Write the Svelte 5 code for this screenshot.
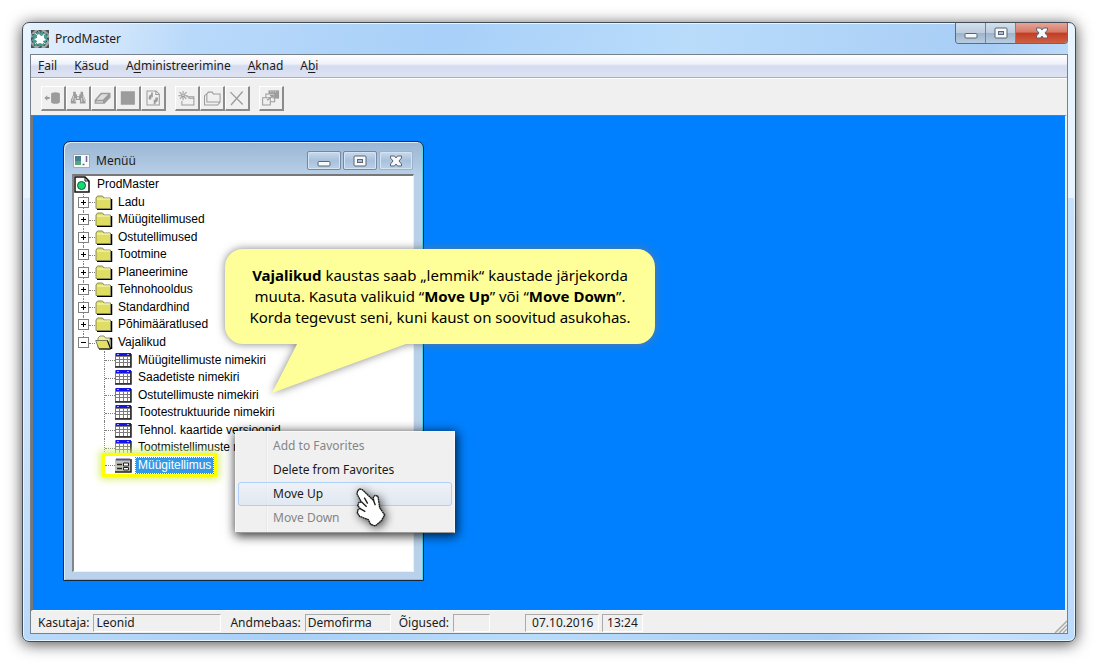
<script>
  const menus = [
    ['', 'F', 'ail'],
    ['', 'K', 'äsud'],
    ['A', 'd', 'ministreerimine'],
    ['', 'A', 'knad'],
    ['A', 'b', 'i'],
  ];

  const toolGroups = [
    ['Connect', 'Find', 'Erase', 'Stop', 'Refresh'],
    ['New folder', 'Folder', 'Delete'],
    ['Windows'],
  ];

  const folders = [
    'Ladu',
    'Müügitellimused',
    'Ostutellimused',
    'Tootmine',
    'Planeerimine',
    'Tehnohooldus',
    'Standardhind',
    'Põhimääratlused',
  ];

  const favorites = [
    'Müügitellimuste nimekiri',
    'Saadetiste nimekiri',
    'Ostutellimuste nimekiri',
    'Tootestruktuuride nimekiri',
    'Tehnol. kaartide versioonid',
    'Tootmistellimuste nimekiri',
    'Müügitellimus',
  ];

  const actions = [
    { label: 'Add to Favorites', disabled: true },
    { label: 'Delete from Favorites', disabled: false },
    { label: 'Move Up', disabled: false },
    { label: 'Move Down', disabled: true },
  ];

  let selected = $state('Müügitellimus');
  let active = $state('Move Up');
</script>

{#snippet minIcon()}
  <svg width="14" height="12" viewBox="0 0 14 12" aria-hidden="true">
    <rect x="1" y="6.5" width="12" height="4.5" rx="1" fill="#f6f8fa" stroke="#5b6573" />
  </svg>
{/snippet}

{#snippet maxIcon()}
  <svg width="14" height="12" viewBox="0 0 14 12" aria-hidden="true">
    <rect x="1" y="1" width="12" height="10" rx="1" fill="#f6f8fa" stroke="#5b6573" />
    <rect x="4.5" y="4.5" width="5" height="3" fill="#a9bfd6" stroke="#5b6573" />
  </svg>
{/snippet}

{#snippet closeIcon()}
  <svg width="14" height="12" viewBox="0 0 14 12" aria-hidden="true">
    <path
      d="M1.500 1h4L7 3l1.500-2h4v2L10 6l2.500 3v2h-4L7 9l-1.500 2h-4V9L4 6 1.500 3z"
      fill="#f6f8fa"
      stroke="#5b6573"
      stroke-linejoin="round"
    />
  </svg>
{/snippet}

{#snippet toolIcon(name)}
  <svg viewBox="0 0 75 72" aria-hidden="true">
    {#if name === 'Connect'}
      <path d="M8 36l10-9v6h8v6h-8v6z M31 22q0-6 15-6t15 6v28q0 6-15 6t-15-6z" fill="#9c9c9c" />
    {:else if name === 'Find'}
      <path
        d="M21 15h9v8h4v7h8v-7h4v-8h9v9l8 18v13H44V43H31v12H13V43l8-18z"
        fill="#9c9c9c"
      />
      <path d="M23 30l-5 16M28 36v14M50 36v14M55 30l5 16" stroke="#efefef" stroke-width="2.500" />
      <path d="M35 33h5v6h-5z" fill="#efefef" />
    {:else if name === 'Erase'}
      <path d="M30 18h33v16L43 56H9V43z" fill="#9c9c9c" />
      <path d="M33 23h22L37 42H16zM15 47h22v4H15z" fill="#dedede" />
    {:else if name === 'Stop'}
      <path d="M13 13h48v46H13z" fill="#9c9c9c" />
    {:else if name === 'Refresh'}
      <path d="M17 12h31l11 11v37H17zM47 12v12h12" fill="none" stroke="#9c9c9c" stroke-width="3.500" />
      <path
        d="M37 17v18l-4-4-2 10h-8q-2-15 8-17v-7zM40 57V40l4 4 2-10h8q2 15-8 17v6z"
        fill="#9c9c9c"
      />
    {:else if name === 'New folder'}
      <path d="M35 32h26v28H20V46M44 32v5h17" fill="none" stroke="#9c9c9c" stroke-width="3.500" />
      <path
        d="M24 12v32M8 28h32M12 16l24 24M36 16L12 40"
        stroke="#9c9c9c"
        stroke-width="3.500"
        stroke-dasharray="13 5 14"
      />
    {:else if name === 'Folder'}
      <path
        d="M20 22l5-6h13l4 6h23v28H20zM20 22l-8 6v32h45l7-9"
        fill="none"
        stroke="#9c9c9c"
        stroke-width="3.500"
      />
    {:else if name === 'Delete'}
      <path d="M15 16l42 42M57 14L17 60" stroke="#9c9c9c" stroke-width="4.500" />
    {:else}
      <path d="M29 10h36v28H29z" fill="#9c9c9c" />
      <path d="M35 15h4M43 15h4M51 15h4" stroke="#efefef" stroke-width="2.500" />
      <path d="M20 22h30v27H20z" fill="#efefef" stroke="#9c9c9c" stroke-width="3.500" />
      <path d="M9 35h26v25H9z" fill="#efefef" stroke="#9c9c9c" stroke-width="3.500" />
      <path d="M24 44l20-15M34 28h11v10" fill="none" stroke="#9c9c9c" stroke-width="4.500" />
    {/if}
  </svg>
{/snippet}

{#snippet expander(open)}
  <svg class="expander" width="11" height="11" viewBox="0 0 11 11" aria-hidden="true">
    <rect x=".5" y=".5" width="10" height="10" fill="#fff" stroke="#808080" />
    <path d={open ? 'M3 5.500h5' : 'M3 5.500h5M5.500 3v5'} stroke="#000" />
  </svg>
{/snippet}

{#snippet folderIcon(open)}
  <svg width="18" height="15" viewBox="0 0 18 15" aria-hidden="true">
    {#if open}
      <path d="M3 13V3l2-2h4l1.500 2H15v11z" fill="#f1f0a0" stroke="#8c8c6e" />
      <path d="M15 3.500h1.500V14" fill="none" stroke="#000" stroke-width="1.500" />
      <path d="M.7 5.500h11.500L15.500 14H4z" fill="#e3e063" stroke="#77775a" />
      <path d="M12.500 5.500l3.200 8.500H4" fill="none" stroke="#000" />
    {:else}
      <path d="M2 14.300h14.500V4" fill="none" stroke="#000" stroke-width="1.500" />
      <path d="M1 13V3l1.500-2h5L9 3h6.500v10.500H1z" fill="#e0de62" stroke="#8c8c5a" />
      <path d="M2 4h13" stroke="#fbfac8" />
    {/if}
  </svg>
{/snippet}

{#snippet tableIcon()}
  <svg width="17" height="15" viewBox="0 0 17 15" aria-hidden="true">
    <path d="M.5.500h15v13H.5z" fill="#fff" stroke="#777" />
    <path d="M1 0h15v3H1z" fill="#1414e6" />
    <path d="M2 1.500h2M12 1.500h2" stroke="#a8a8ff" />
    <path d="M1 3.500h15M1 6.500h15M1 9.500h15M4.500 3v11M8.500 3v11M12.500 3v11" stroke="#7c7c7c" />
    <path d="M16 1v13H0" fill="none" stroke="#222" stroke-width="1.500" />
  </svg>
{/snippet}

{#snippet formIcon()}
  <svg width="17" height="15" viewBox="0 0 17 15" aria-hidden="true">
    <path d="M0 1h16v13H0z" fill="#c4c4b8" />
    <path d="M1 1.500h14" stroke="#55558c" stroke-width="2" />
    <path d="M16 1v13H0" fill="none" stroke="#222" stroke-width="1.500" />
    <path d="M2 6.500h5M2 10.500h5" stroke="#222" stroke-width="1.500" />
    <path d="M8.500 5h5v3h-5zM8.500 9.500h5v2.500h-5z" fill="#fff" stroke="#222" />
  </svg>
{/snippet}

<main class="window">
  <header class="titlebar">
    <svg width="18" height="18" viewBox="0 0 18 18" aria-hidden="true">
      <path d="M0 0h18v18H0z" fill="#a3a8a6" />
      <path
        d="M0 0h4L0 4zM18 0h-4l4 4zM0 18h4l-4-4zM18 18h-4l4-4zM7 0h4L9 2zM7 18h4l-2-2zM0 7v4l2-2zM18 7v4l-2-2z"
        fill="#4d5252"
      />
      <path
        d="M6 1l2 2 3-2 2 2 3 1v3l1 3-2 2-1 3-3 1-2 1-2-2-3 1-2-3-1-2 1-3-1-3 3-1z"
        fill="#4a9c93"
        stroke="#3a4a4a"
        stroke-dasharray="2 2"
      />
      <path
        d="M8 4l2 2 3-1v3l2 2-3 1v3l-3-1-3 1v-3L3 9l3-1V5z"
        fill="#fff"
      />
      <path d="M4 3l2 2M14 4l-2 1M4 14l2-2M14 14l-2-2" stroke="#c9ecdf" />
    </svg>
    <h1>ProdMaster</h1>
    <div class="caption">
      <button aria-label="Minimize">{@render minIcon()}</button>
      <button aria-label="Maximize">{@render maxIcon()}</button>
      <button class="close" aria-label="Close">{@render closeIcon()}</button>
    </div>
  </header>

  <div class="client">
    <nav class="menubar">
      {#each menus as [before, key, after]}
        <button>{before}<u>{key}</u>{after}</button>
      {/each}
    </nav>

    <div class="toolbar">
      {#each toolGroups as group}
        <div class="tool-group">
          {#each group as name}
            <button aria-label={name}>{@render toolIcon(name)}</button>
          {/each}
        </div>
      {/each}
    </div>

    <div class="workspace">
      <section class="child">
        <header class="child-title">
          <svg width="17" height="14" viewBox="0 0 17 14" aria-hidden="true">
            <path d="M.5.500h16v13H.5z" fill="#f8fafb" stroke="#a5aab0" />
            <path d="M2 2h6v9H2z" fill="#427e9a" />
            <path d="M2 7h6v4H2z" fill="#55a678" />
            <path d="M9.500 10.500h2M13.500 2v6" stroke="#669" stroke-width="1.500" />
          </svg>
          <h2>Menüü</h2>
          <div class="child-caption">
            <button aria-label="Minimize menu">{@render minIcon()}</button>
            <button aria-label="Maximize menu">{@render maxIcon()}</button>
            <button class="faded" aria-label="Close menu">{@render closeIcon()}</button>
          </div>
        </header>
        <div class="child-body">
          <ul class="tree">
            <li class="root">
              <svg width="16" height="17" viewBox="0 0 16 17" aria-hidden="true">
                <path d="M1 1h10l4 4v11H1z" fill="#fff" stroke="#111" stroke-width="1.500" />
                <path d="M11 1v4h4" fill="none" stroke="#111" />
                <circle cx="7.500" cy="9.500" r="4" fill="#10e070" stroke="#145c3c" />
              </svg>
              <button>ProdMaster</button>
            </li>
            {#each folders as name}
              <li class="branch">
                {@render expander(false)}
                {@render folderIcon(false)}
                <button>{name}</button>
              </li>
            {/each}
            <li class="branch last">
              {@render expander(true)}
              {@render folderIcon(true)}
              <button>Vajalikud</button>
            </li>
            {#each favorites as name, i}
              <li class="leaf" class:last={i === favorites.length - 1}>
                {#if i === favorites.length - 1}
                  {@render formIcon()}
                {:else}
                  {@render tableIcon()}
                {/if}
                <button class:selected={selected === name} onclick={() => (selected = name)}>
                  {name}
                </button>
                {#if i === favorites.length - 1}
                  <span class="marker"></span>
                {/if}
              </li>
            {/each}
          </ul>
        </div>
      </section>

      <div class="context">
        {#each actions as action}
          <button
            class:active={active === action.label}
            disabled={action.disabled}
            onclick={() => (active = action.label)}>{action.label}</button
          >
        {/each}
      </div>

      <aside class="callout">
        <p>
          <b>Vajalikud</b> kaustas saab „lemmik“ kaustade järjekorda<br />
          muuta. Kasuta valikuid “<b>Move Up</b>” või “<b>Move Down</b>”.<br />
          Korda tegevust seni, kuni kaust on soovitud asukohas.
        </p>
        <svg class="tail" width="134" height="49" viewBox="0 0 134 49" aria-hidden="true">
          <path d="M25 0h109L0 49z" fill="#ffff99" />
        </svg>
      </aside>

      <svg class="pointer" width="31" height="40" viewBox="0 0 93 120" aria-hidden="true">
        <path
          d="M8 11l6-5 8 2 34 33-1-10 5-6 9 3 5 34 15 22-9 16-19 17-14-5-7-14-26-10-7-10 2-10 6-4-7-8 3-9 8-2-13-24z"
          fill="#fff"
          stroke="#1c1c1c"
          stroke-width="4"
          stroke-linejoin="round"
          stroke-dasharray="6 1"
        />
        <path d="M20 45l15 14M14 64l17 10M56 41l5 14M28 32l10 18" stroke="#1c1c1c" stroke-width="4" />
      </svg>
    </div>

    <footer class="status">
      <span class="label">Kasutaja:</span><output class="user">Leonid</output>
      <span class="label">Andmebaas:</span><output class="db">Demofirma</output>
      <span class="label">Õigused:</span><output class="rights"></output>
      <output class="date">07.10.2016</output>
      <output class="time">13:24</output>
      <svg class="grip" width="13" height="13" viewBox="0 0 13 13" aria-hidden="true">
        <path d="M1 13L13 1M5 13l8-8M9 13l4-4" stroke="#aaa" stroke-width="1.500" />
      </svg>
    </footer>
  </div>
</main>

<style>
  :global(body) {
    margin: 0;
    background: #fff;
  }
  :global(#app) {
    display: flow-root;
  }
  * {
    box-sizing: border-box;
  }
  button {
    margin: 0;
    padding: 0;
    border: 0;
    background: none;
    color: inherit;
    font: inherit;
    text-align: left;
    white-space: nowrap;
  }
  svg {
    display: block;
    flex: none;
  }
  .window {
    display: flex;
    flex-direction: column;
    min-height: calc(100vh - 44px);
    margin: 22px;
    padding: 0 7px 7px;
    border: 1px solid #454c55;
    border-radius: 7px;
    background:
      linear-gradient(#e8f4ff, #e8f4ff) left top / 7px 175px no-repeat,
      linear-gradient(#e8f4ff, #e8f4ff) right top / 7px 175px no-repeat,
      linear-gradient(105deg, #e4f1fd 0, #cfe5fb 8%, #b9d9fa 14%, #a8d0f8 35%, #b9dcfb 55%, #a8cdf5 80%, #c7e2fc 90%, #bcdcfc);
    box-shadow:
      inset 0 0 0 1px #e6f4ff,
      0 2px 15px rgba(0, 0, 0, 0.7);
    color: #1b1b1b;
    font: 12px/16px "Noto Sans", "Open Sans", sans-serif;
  }
  .titlebar {
    display: flex;
    align-items: center;
    gap: 6px;
    height: 31px;
    padding-left: 1px;
  }
  h1,
  h2 {
    flex: 1;
    margin: 0;
    font-size: 12px;
    font-weight: 400;
  }
  .caption {
    display: flex;
    align-self: flex-start;
    height: 21px;
    border: 1px solid #5c6b7d;
    border-top: 0;
    border-radius: 0 0 4px 4px;
    overflow: hidden;
  }
  .caption button {
    display: grid;
    place-items: center;
    width: 30px;
    border-right: 1px solid #72849a;
    background: linear-gradient(#d3e0ee, #bccddf 48%, #9db3ca 50%, #b9cde2);
  }
  .caption .close {
    width: 51px;
    border: 0;
    background: linear-gradient(#e6a598, #d67a68 46%, #c23c22 50%, #cf6044);
  }
  .client {
    display: flex;
    flex: 1;
    flex-direction: column;
    border: 1px solid #77818c;
    background: #f0f0f0;
  }
  .menubar {
    display: flex;
    gap: 17px;
    height: 23px;
    padding: 3px 7px;
    border-bottom: 1px solid #a9aebb;
    background: linear-gradient(#fff, #eef1f9 40%, #d5dcef 50%, #dee3f4);
  }
  u {
    text-underline-offset: 2px;
  }
  .toolbar {
    display: flex;
    gap: 9px;
    padding: 7px 10px 4px;
    border-top: 1px solid #fff;
  }
  .tool-group {
    display: flex;
  }
  .toolbar button {
    width: 25px;
    height: 25px;
    border: 1px solid #fff;
    border-right: 2px solid #8b8b8b;
    border-bottom: 2px solid #8b8b8b;
  }
  .toolbar svg {
    width: 100%;
    height: 100%;
  }
  .workspace {
    position: relative;
    flex: 1;
    min-height: 480px;
    border: 1px solid #777;
    border-left-width: 2px;
    border-right: 2px solid #eee;
    border-bottom-color: #fff;
    background: #0080ff;
  }
  .child {
    position: absolute;
    top: 25px;
    left: 30px;
    display: flex;
    flex-direction: column;
    width: 361px;
    padding: 0 9px 8px 8px;
    border: 1px solid #17283a;
    border-radius: 7px 7px 0 0;
    background: linear-gradient(#9ab6d3, #b9d0e8 34px, #b9d1ea);
    box-shadow:
      inset 1px 1px 0 #dcecf8,
      inset -1px -1px 0 #56d7e6;
  }
  .child-title {
    display: flex;
    align-items: center;
    gap: 6px;
    height: 32px;
    padding: 5px 1px 0;
  }
  .child-caption {
    display: flex;
    gap: 2px;
  }
  .child-caption button {
    display: grid;
    place-items: center;
    width: 34px;
    height: 19px;
    border: 1px solid #7289a4;
    border-radius: 2px;
    background: linear-gradient(#c9daec, #a8c1dc 50%, #b9d0e7);
    box-shadow: inset 0 0 0 1px #d5e4f2;
  }
  .child-caption .faded {
    border-color: #9ab2cc;
  }
  .child-body {
    height: 398px;
    border: 1px solid #f0f0f0;
    border-top: 2px solid #777;
    border-left: 2px solid #858585;
    background: #fff;
  }
  .tree {
    display: grid;
    grid-auto-rows: 1fr;
    height: 298px;
    margin: 0;
    padding: 0;
    color: #000;
    font: 12px/15px "Liberation Sans", Arial, sans-serif;
    list-style: none;
  }
  .tree li {
    position: relative;
    display: flex;
    align-items: center;
  }
  .root {
    gap: 5px;
  }
  .branch {
    gap: 3px;
    padding-left: 4px;
  }
  .branch .expander {
    position: relative;
    z-index: 1;
    margin-right: 3px;
  }
  .branch::before,
  .leaf::before {
    position: absolute;
    top: 0;
    bottom: 0;
    left: 9px;
    border-left: 1px dotted #808080;
    content: "";
  }
  .branch::after,
  .leaf::after {
    position: absolute;
    top: 50%;
    left: 15px;
    width: 6px;
    border-top: 1px dotted #808080;
    content: "";
  }
  .leaf {
    gap: 4px;
    padding-left: 41px;
  }
  .leaf::before {
    left: 30px;
  }
  .leaf::after {
    left: 31px;
    width: 10px;
  }
  .last::before {
    bottom: 50%;
  }
  .tree button {
    padding: 0 2px;
  }
  .tree .selected {
    outline: 1px dotted #b56a2c;
    background: #3399e6;
    color: #fff;
  }
  .marker {
    position: absolute;
    top: -3px;
    left: 28px;
    width: 115px;
    height: 24px;
    border: 3px solid #ffff00;
    box-shadow: 0 0 8px 2px #d4ee70;
  }
  .context {
    position: absolute;
    top: 315px;
    left: 202px;
    display: flex;
    flex-direction: column;
    width: 220px;
    padding: 2px;
    border: 1px solid #f8f8f8;
    border-bottom-color: #999;
    background: linear-gradient(90deg, transparent 30px, #e0e0e0 30px, #fff 32px, transparent 32px) #f0f0f0;
    box-shadow: 1px 2px 10px 1px rgba(0, 0, 0, 0.8);
  }
  .context button {
    height: 24px;
    padding-left: 34px;
    border: 1px solid transparent;
    border-radius: 3px;
  }
  .context button:disabled {
    color: #858585;
  }
  .context .active {
    border-color: #aecff7;
    background: linear-gradient(rgba(238, 243, 250, 0.6), rgba(215, 227, 243, 0.6));
  }
  .callout {
    position: absolute;
    top: 133px;
    left: 192px;
    width: 430px;
    padding: 16px 0;
    border-radius: 18px;
    background: #ffff99;
    color: #000;
    filter: drop-shadow(0 0 4px rgba(120, 120, 120, 0.9));
    font: 15px/21px "Noto Sans", "Open Sans", sans-serif;
    text-align: center;
  }
  .callout p {
    margin: 0;
    white-space: nowrap;
  }
  .tail {
    position: absolute;
    top: 100%;
    left: 47px;
  }
  .pointer {
    position: absolute;
    top: 371px;
    left: 322px;
    filter: drop-shadow(2px 2px 5px rgba(0, 0, 0, 0.7));
  }
  .status {
    display: flex;
    align-items: center;
    height: 22px;
    padding: 2px 0 0 7px;
  }
  .label {
    margin-right: 4px;
  }
  .status output {
    height: 18px;
    padding-left: 2px;
    border: 1px solid #aaa;
    border-right-color: #fff;
    border-bottom-color: #fff;
  }
  .status .user {
    width: 128px;
    margin-right: 9px;
  }
  .status .db {
    width: 86px;
    margin-right: 8px;
  }
  .status .rights {
    width: 37px;
    margin-right: 35px;
  }
  .status .date {
    width: 74px;
    margin-right: 3px;
    padding-left: 6px;
  }
  .status .time {
    width: 41px;
    padding-left: 4px;
  }
  .grip {
    align-self: flex-end;
    margin-left: auto;
  }
</style>
